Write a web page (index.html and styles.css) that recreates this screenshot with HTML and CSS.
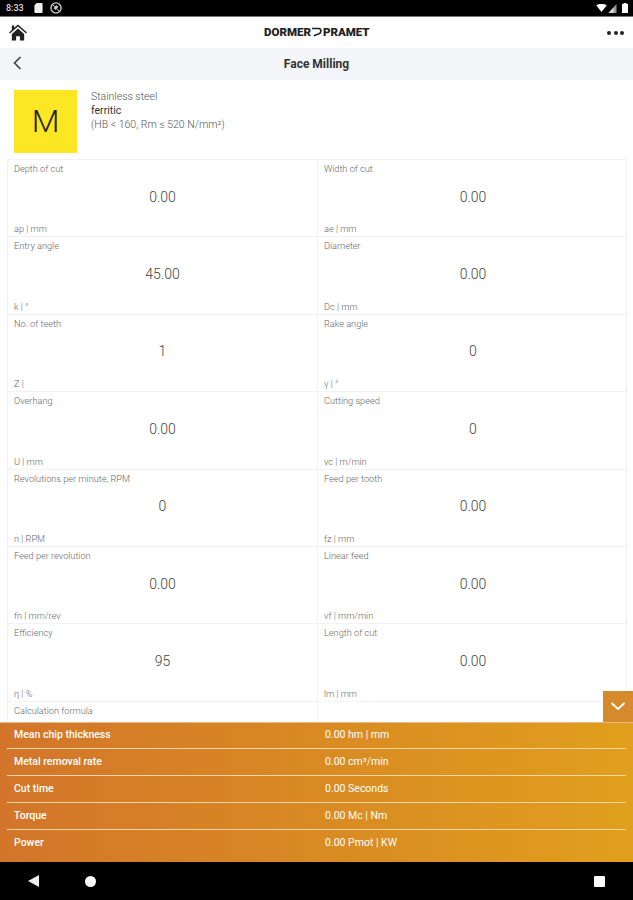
FILE: index.html
```html
<!DOCTYPE html>
<html>
<head>
  <title>Face Milling</title>
  <link rel="stylesheet" href="styles.css">
</head>
<body>
  <div class="page">
    <div class="status-bar">
      <div class="status-left">
        <span class="clock">8:33</span>
        <svg class="status-icon" width="9" height="10" viewBox="0 0 9 11"><path d="M2.500 0H8a1 1 0 0 1 1 1v9a1 1 0 0 1-1 1H1a1 1 0 0 1-1-1V2.500z" fill="#eee"/></svg>
        <svg class="status-icon" width="12" height="12" viewBox="0 0 13 13"><circle cx="6.500" cy="6.500" r="5.500" fill="none" stroke="#ccc" stroke-width="1.500"/><path d="M3 3l7 7M4.500 7l2-3 2 1-2 3z" fill="#ccc" stroke="#ccc"/></svg>
      </div>
      <div class="status-right">
        <svg width="11" height="8" viewBox="0 0 12 9"><path d="M0 1.500Q6-2 12 1.500L6 9z" fill="#fff"/></svg>
        <svg class="signal" width="9" height="9" viewBox="0 0 8 9"><path d="M8 0v9H0z" fill="#999"/><path d="M5 3.500v5.500H0z" fill="#ddd"/></svg>
        <svg width="6" height="10" viewBox="0 0 6 10"><path d="M1.500 0h3v1H6v9H0V1h1.500z" fill="#fff"/></svg>
      </div>
    </div>

    <header class="top-bar">
      <svg class="home-icon" width="18" height="17" viewBox="0 0 19 17"><path d="M9.500 0L19 8.500l-1 1.100L9.500 2.200 1 9.600 0 8.500l3-2.700V1h2.500v2.500zM3 10.200l6.500-5.800 6.500 5.800V17h-4.500v-4.500h-4V17H3z" fill="#222"/></svg>
      <div class="logo">DORMER<svg width="12" height="10" viewBox="0 0 13 10"><path d="M1 1.200h7.500c3 0 3 5-.5 6L3 9" fill="none" stroke="#222" stroke-width="1.800"/></svg>PRAMET</div>
      <div class="more"><i></i><i></i><i></i></div>
    </header>

    <div class="sub-bar">
      <svg class="back-icon" width="9" height="14" viewBox="0 0 9 14"><path d="M7.500 1L1.500 7l6 6" fill="none" stroke="#444" stroke-width="1.700"/></svg>
      <h1>Face Milling</h1>
    </div>

    <main class="content">
      <section class="material">
        <div class="material-code">M</div>
        <div class="material-text">
          <p>Stainless steel</p>
          <p class="strong">ferritic</p>
          <p>(HB &lt; 160, Rm ≤ 520 N/mm²)</p>
        </div>
      </section>

      <section class="grid">
        <div class="cell"><label>Depth of cut</label><div class="value">0.00</div><span>ap | mm</span></div>
        <div class="cell"><label>Width of cut</label><div class="value">0.00</div><span>ae | mm</span></div>
        <div class="cell"><label>Entry angle</label><div class="value">45.00</div><span>k | °</span></div>
        <div class="cell"><label>Diameter</label><div class="value">0.00</div><span>Dc | mm</span></div>
        <div class="cell"><label>No. of teeth</label><div class="value">1</div><span>Z |</span></div>
        <div class="cell"><label>Rake angle</label><div class="value">0</div><span>γ | °</span></div>
        <div class="cell"><label>Overhang</label><div class="value">0.00</div><span>U | mm</span></div>
        <div class="cell"><label>Cutting speed</label><div class="value">0</div><span>vc | m/min</span></div>
        <div class="cell"><label>Revolutions per minute, RPM</label><div class="value">0</div><span>n | RPM</span></div>
        <div class="cell"><label>Feed per tooth</label><div class="value">0.00</div><span>fz | mm</span></div>
        <div class="cell"><label>Feed per revolution</label><div class="value">0.00</div><span>fn | mm/rev</span></div>
        <div class="cell"><label>Linear feed</label><div class="value">0.00</div><span>vf | mm/min</span></div>
        <div class="cell"><label>Efficiency</label><div class="value">95</div><span>η | %</span></div>
        <div class="cell"><label>Length of cut</label><div class="value">0.00</div><span>lm | mm</span></div>
        <div class="cell"><label>Calculation formula</label></div>
        <div class="cell"></div>
      </section>
    </main>

    <footer class="results">
      <button class="collapse"><svg width="16" height="9" viewBox="0 0 16 9"><path d="M1.500 1L8 7l6.500-6" fill="none" stroke="#fff" stroke-width="1.800"/></svg></button>
      <div class="result"><b>Mean chip thickness</b><span>0.00 hm | mm</span></div>
      <div class="result"><b>Metal removal rate</b><span>0.00 cm³/min</span></div>
      <div class="result"><b>Cut time</b><span>0.00 Seconds</span></div>
      <div class="result"><b>Torque</b><span>0.00 Mc | Nm</span></div>
      <div class="result"><b>Power</b><span>0.00 Pmot | KW</span></div>
    </footer>

    <nav class="nav-bar">
      <svg width="12" height="12" viewBox="0 0 12 12"><path d="M11 0v12L0 6z" fill="#eee"/></svg>
      <div class="nav-circle"></div>
      <div class="nav-square"></div>
    </nav>
  </div>
</body>
</html>
```

FILE: styles.css
```css
* {
  box-sizing: border-box;
}
body {
  margin: 0;
  font-family: Roboto, "Liberation Sans", sans-serif;
  background-color: #fff;
}
.page {
  position: relative;
  width: 633px;
  height: 900px;
  display: flex;
  flex-direction: column;
  overflow: hidden;
}
.status-bar {
  height: 17px;
  flex: none;
  display: flex;
  justify-content: space-between;
  align-items: center;
  padding: 0 5px 0 6px;
  background-color: #000;
  border-bottom: 1px solid #777;
}
.status-left, .status-right {
  display: flex;
  align-items: center;
}
.status-left {
  gap: 7px;
}
.status-right {
  gap: 1px;
}
.signal {
  margin-right: 4px;
}
.clock {
  color: #ddd;
  font-size: 9px;
  font-weight: 500;
  margin-right: 3px;
}
.top-bar {
  height: 31px;
  flex: none;
  position: relative;
  display: flex;
  justify-content: space-between;
  align-items: center;
  padding: 0 9px;
}
.logo {
  position: absolute;
  left: 264px;
  top: 8px;
  display: flex;
  align-items: center;
  font-size: 11.500px;
  line-height: 14px;
  font-weight: 900;
  color: #222;
}
.more {
  display: flex;
  gap: 2.500px;
}
.more i {
  width: 4px;
  height: 4px;
  border-radius: 50%;
  background-color: #222;
}
.sub-bar {
  height: 32px;
  flex: none;
  position: relative;
  display: flex;
  align-items: center;
  justify-content: center;
  background-color: #f3f5f8;
}
.back-icon {
  position: absolute;
  left: 13px;
  top: 8px;
}
.sub-bar h1 {
  margin: 0;
  font-size: 12px;
  font-weight: 700;
  color: #333;
}
.content {
  flex: 1;
  overflow: hidden;
  padding: 0 6px 0 7px;
}
.material {
  height: 79px;
  display: flex;
  align-items: flex-start;
  gap: 14px;
  padding: 10px 0 0 7px;
}
.material-code {
  width: 63px;
  height: 63px;
  display: flex;
  align-items: center;
  justify-content: center;
  padding-bottom: 2px;
  background-color: #fde725;
  color: #222;
  font-size: 32px;
  font-weight: 300;
}
.material-text p {
  margin: 0;
  font-size: 10.500px;
  font-weight: 300;
  line-height: 14px;
  color: #555;
}
.material-text .strong {
  color: #333;
  font-weight: 400;
}
.grid {
  display: grid;
  grid-template-columns: 310px 310px;
  grid-auto-rows: 77.400px;
  border-top: 1px solid #f0f2f4;
  border-left: 1px solid #f0f2f4;
  border-right: 1px solid #f0f2f4;
}
.cell {
  display: flex;
  flex-direction: column;
  height: 77.400px;
  padding: 3px 6px 1px;
  border-bottom: 1px solid #f0f2f4;
  font-size: 9.200px;
  font-weight: 300;
  line-height: 12px;
  color: #666;
}
.cell:nth-child(odd) {
  border-right: 1px solid #f0f2f4;
}
.value {
  flex: 1;
  display: flex;
  align-items: center;
  justify-content: center;
  padding-bottom: 5px;
  font-size: 14px;
  font-weight: 300;
  color: #444;
}
.results {
  position: relative;
  height: 140px;
  flex: none;
  padding: 0 7px;
  background: linear-gradient(90deg, #d2752a, #e09f1c);
  border-top: 1px solid #e9b98a;
}
.result {
  display: flex;
  height: 27px;
  align-items: center;
  padding: 0 0 2px 7px;
  border-bottom: 1px solid #f2d6a8;
  color: #fff;
  font-size: 10.500px;
}
.result:first-of-type {
  height: 26px;
  padding-bottom: 3px;
}
.result:last-child {
  padding-bottom: 3px;
  border-bottom: 0;
}
.result b {
  width: 311px;
  font-weight: 500;
}
.result span {
  font-weight: 400;
}
.collapse {
  position: absolute;
  right: 0;
  top: -32px;
  width: 30px;
  height: 31px;
  padding: 0;
  border: 0;
  background-color: #d58a2b;
}
.nav-bar {
  position: relative;
  height: 38px;
  flex: none;
  display: flex;
  align-items: center;
  padding-left: 28px;
  gap: 45px;
  background-color: #000;
}
.nav-circle {
  width: 11px;
  height: 11px;
  border-radius: 50%;
  background-color: #fff;
}
.nav-square {
  width: 11px;
  height: 11px;
  margin-left: auto;
  margin-right: 28px;
  border-radius: 1px;
  background-color: #fff;
}
```
